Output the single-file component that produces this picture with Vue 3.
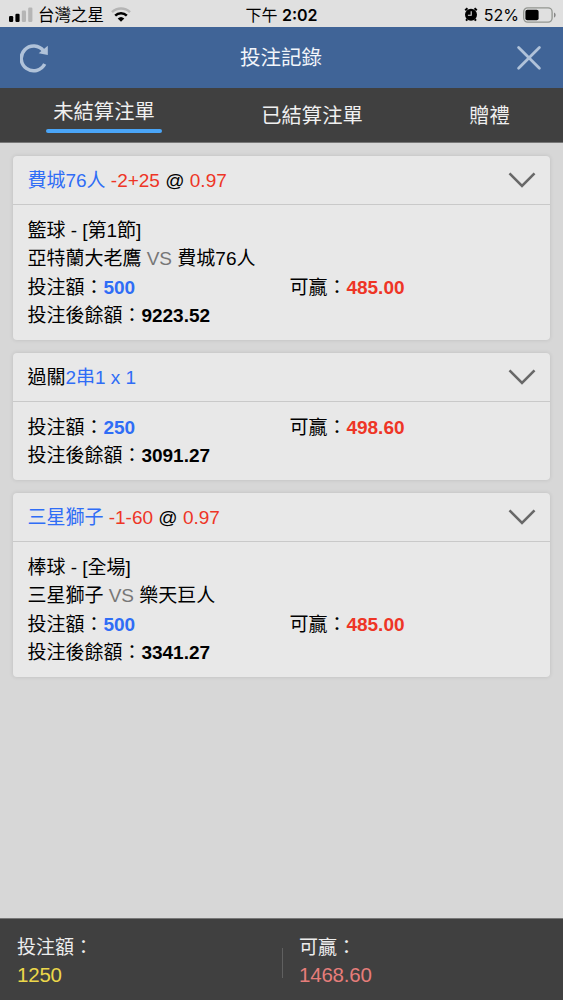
<script setup>
import { ref } from 'vue';

const tabs = ['未結算注單', '已結算注單', '贈禮'];
const activeTab = ref(0);

const bets = [
  {
    title: [
      { text: '費城76人', color: 'blue' },
      { text: ' -2+25', color: 'red' },
      { text: ' @ ' },
      { text: '0.97', color: 'red' },
    ],
    game: '籃球 - [第1節]',
    home: '亞特蘭大老鷹',
    away: '費城76人',
    amount: '500',
    win: '485.00',
    balance: '9223.52',
  },
  {
    title: [{ text: '過關' }, { text: '2串1 x 1', color: 'blue' }],
    amount: '250',
    win: '498.60',
    balance: '3091.27',
  },
  {
    title: [
      { text: '三星獅子', color: 'blue' },
      { text: ' -1-60', color: 'red' },
      { text: ' @ ' },
      { text: '0.97', color: 'red' },
    ],
    game: '棒球 - [全場]',
    home: '三星獅子',
    away: '樂天巨人',
    amount: '500',
    win: '485.00',
    balance: '3341.27',
  },
];
</script>

<template>
  <div class="app" lang="zh-Hant">
    <div class="status">
      <div class="status-left">
        <svg class="signal" width="24" height="16" viewBox="0 0 24 16">
          <rect x="0" y="9" width="4.2" height="6" rx="1.2" />
          <rect x="6.4" y="6.8" width="4.2" height="8.2" rx="1.2" />
          <rect x="12.8" y="3.5" width="4.2" height="11.5" rx="1.2" class="dim" />
          <rect x="19.2" y="0.5" width="4.2" height="14.5" rx="1.2" class="dim" />
        </svg>
        <span class="carrier">台灣之星</span>
        <svg class="wifi" width="20" height="15" viewBox="0 0 20 15">
          <path class="dim-line" d="M1 5.2a13 13 0 0 1 18 0" />
          <path d="M4.2 8.6a8.3 8.3 0 0 1 11.6 0" />
          <path class="dot" d="M10 14.8 6.7 11.5a4.8 4.8 0 0 1 6.6 0z" />
        </svg>
      </div>
      <div class="time">下午 <span>2:02</span></div>
      <div class="status-right">
        <svg class="alarm" width="14" height="15" viewBox="0 0 14 15">
          <path d="M1.2 3.3 3.5 1.3M12.8 3.3 10.5 1.3M3.3 12.2 2 13.6M10.7 12.2 12 13.6" stroke="#000" stroke-width="2" />
          <circle cx="7" cy="7.8" r="6" />
          <path d="M7.2 4.3v3.9H3.9" fill="none" stroke="#e2e2e2" stroke-width="1.1" />
        </svg>
        <span class="percent">52%</span>
        <svg class="battery" width="33" height="16" viewBox="0 0 33 16">
          <rect x="0.7" y="0.9" width="28.4" height="14.2" rx="4" fill="none" stroke="#929590" stroke-width="1.3" />
          <rect x="2.4" y="2.8" width="13.2" height="10.4" rx="2" />
          <path d="M31 5.4c2.2 1 2.2 4.2 0 5.2z" fill="#888" />
        </svg>
      </div>
    </div>

    <header class="header">
      <svg width="30" height="30" viewBox="0 0 30 30">
        <path d="M24.7 21A12.4 12.4 0 1 1 23.6 8" fill="none" stroke="#b0c2d9" stroke-width="3.5" />
        <path d="M27.8 2.8v9.2L18.7 10.2z" fill="#b0c2d9" />
      </svg>
      <h1>投注記錄</h1>
      <svg width="26" height="26" viewBox="0 0 26 26">
        <path d="M2.6 2.4 23.4 23.2M23.4 2.4 2.6 23.2" fill="none" stroke="#b0c2d9" stroke-width="2.8" stroke-linecap="round" />
      </svg>
    </header>

    <nav class="tabs">
      <button
        v-for="(tab, i) in tabs"
        :key="tab"
        :class="{ active: i === activeTab }"
        @click="activeTab = i"
      >{{ tab }}</button>
    </nav>

    <main class="list">
      <section v-for="bet in bets" :key="bet.balance" class="card">
        <div class="card-head">
          <div class="title"><span v-for="part in bet.title" :key="part.text" :class="part.color">{{ part.text }}</span></div>
          <svg width="28" height="18" viewBox="0 0 28 18">
            <path d="M1.5 2.4 14 14.9 26.5 2.4" fill="none" stroke="#686868" stroke-width="2.6" />
          </svg>
        </div>
        <div class="card-body">
          <div v-if="bet.game">{{ bet.game }}</div>
          <div v-if="bet.home">{{ bet.home }} <span class="vs">VS</span> {{ bet.away }}</div>
          <div class="row">
            <div>投注額：<b class="blue">{{ bet.amount }}</b></div>
            <div>可贏：<b class="red">{{ bet.win }}</b></div>
          </div>
          <div>投注後餘額：<b>{{ bet.balance }}</b></div>
        </div>
      </section>
    </main>

    <footer class="footer">
      <div class="total">
        <div>投注額：</div>
        <div class="num yellow">1250</div>
      </div>
      <div class="total win">
        <div>可贏：</div>
        <div class="num pink">1468.60</div>
      </div>
    </footer>
  </div>
</template>

<style>
body {
  margin: 0;
}
</style>

<style scoped>
.app {
  display: flex;
  flex-direction: column;
  height: 1000px;
  background: #d7d7d7;
  color: #000;
  font-family: "Liberation Sans", "Noto Sans CJK TC", sans-serif;
  font-size: 19px;
  overflow: hidden;
}

.status {
  display: grid;
  grid-template-columns: 1fr auto 1fr;
  align-items: center;
  height: 27px;
  flex: none;
  background: #e0e0e0;
  font-family: Inter, "Noto Sans CJK TC", sans-serif;
  font-size: 16px;
  line-height: 27px;
}

.status-left,
.status-right {
  display: flex;
  align-items: center;
}

.status-left {
  padding-left: 9px;
}

.status-right {
  justify-content: flex-end;
  padding-right: 7px;
}

.dim {
  fill: #b5b5b5;
}

.carrier {
  margin: 2px 7px 0 5px;
  font-size: 16.5px;
}

.wifi path {
  fill: none;
  stroke: #000;
  stroke-width: 2.5;
}

.wifi .dim-line {
  stroke: #b5b5b5;
}

.wifi .dot {
  fill: #000;
  stroke: none;
}

.time {
  padding-top: 2px;
  font-weight: 400;
}

.time span {
  font-weight: 600;
}

.percent {
  margin: 2px 4px 0 6px;
}

.header {
  display: flex;
  align-items: center;
  justify-content: space-between;
  height: 61px;
  flex: none;
  box-sizing: border-box;
  padding: 0 21px 0 20px;
  background: #406497;
}

.header h1 {
  margin: 0 4px 3px 0;
  color: #f2f5fa;
  font-size: 20.5px;
  font-weight: 400;
}

.tabs {
  display: grid;
  grid-template-columns: 208px 208px 147px;
  height: 55px;
  flex: none;
  box-sizing: border-box;
  background: #404040;
  border-bottom: 1px solid #777;
  justify-items: center;
  align-items: center;
}

.tabs button {
  padding: 1px 0 0;
  border: 0;
  background: none;
  color: #f0f0f0;
  font: inherit;
  font-size: 20.3px;
  line-height: 34px;
}

.tabs .active {
  width: 116px;
  padding: 0;
  margin-bottom: 2px;
  line-height: 33px;
}

.tabs .active::after {
  content: "";
  display: block;
  height: 4px;
  border-radius: 2px;
  background: #4aa5f7;
}

.list {
  display: flex;
  flex-direction: column;
  gap: 12.5px;
  flex: 1;
  padding: 12.5px 13.5px 0 13px;
}

.card {
  background: #e8e8e8;
  border-radius: 4px;
  box-shadow: 0 0 4px rgba(0, 0, 0, 0.12);
}

.card-head {
  display: flex;
  align-items: center;
  justify-content: space-between;
  height: 49.5px;
  box-sizing: border-box;
  padding: 0 13.5px 0 14.4px;
  border-bottom: 1px solid #c9c9c9;
}

.title {
  padding-bottom: 2.5px;
  white-space: pre-wrap;
}

.card-body {
  padding: 11.5px 14px 9.5px 14.4px;
  line-height: 28.5px;
}

.row {
  display: grid;
  grid-template-columns: 262px 1fr;
}

.blue {
  color: #2f6df6;
}

.red {
  color: #ee3526;
}

.vs {
  color: #777;
}

.footer {
  display: grid;
  grid-template-columns: 282px 1fr;
  align-items: center;
  height: 82px;
  flex: none;
  box-sizing: border-box;
  border-top: 1px solid #777;
  background: #404040;
  color: #ededed;
  line-height: 28px;
}

.total {
  padding: 3px 0 0 17px;
}

.win {
  background: linear-gradient(#606060, #606060) left 17px / 1px 30px no-repeat;
}

.num {
  font-size: 20.5px;
  line-height: 26px;
  letter-spacing: -0.2px;
}

.yellow {
  color: #ecd74a;
}

.pink {
  color: #e67d7a;
}
</style>
